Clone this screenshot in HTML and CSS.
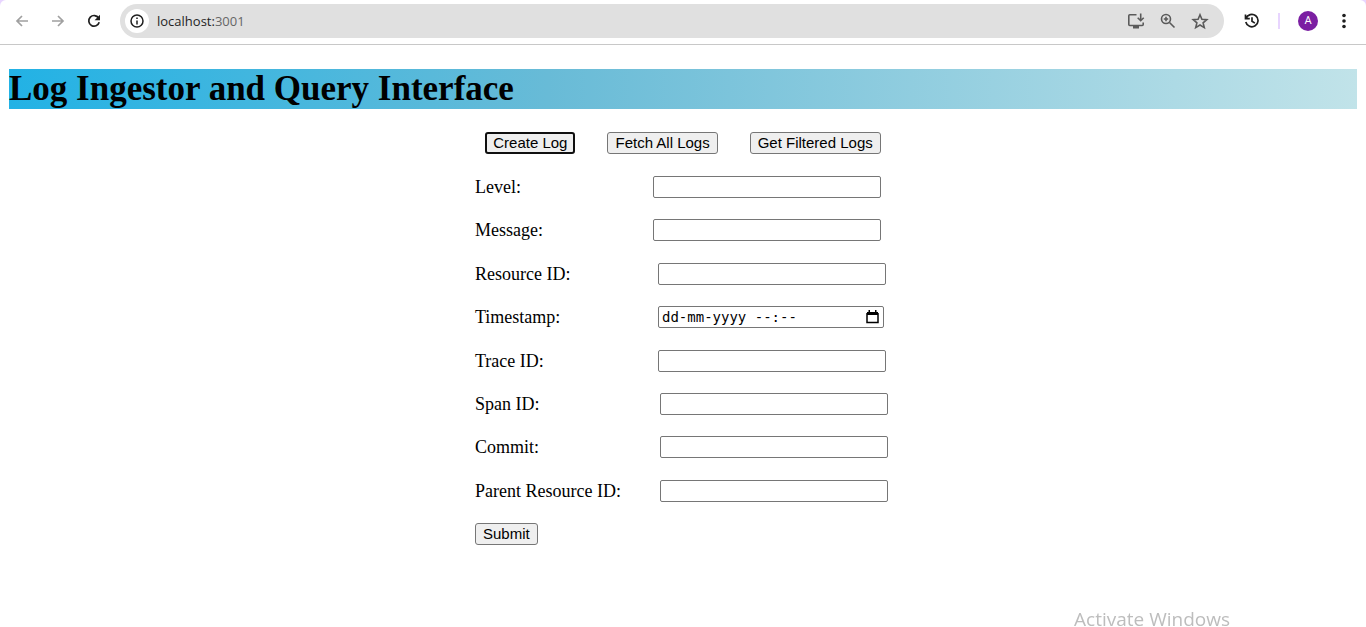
FILE: index.html
```html
<!DOCTYPE html>
<html lang="en">
<head>
<meta charset="utf-8">
<title>Log Ingestor and Query Interface</title>
<link rel="stylesheet" href="styles.css">
</head>
<body>
<div class="frame">
<header class="browser">
  <button class="nav nav-off" type="button" aria-label="Back"><svg viewBox="0 0 14 14"><path d="M13 7H2M7 2 2 7l5 5"/></svg></button>
  <button class="nav nav-off" type="button" aria-label="Forward"><svg viewBox="0 0 14 14"><path d="M1 7h11M7 2l5 5-5 5"/></svg></button>
  <button class="nav" type="button" aria-label="Reload"><svg viewBox="0 0 14 14"><path d="M11.600 4A5.300 5.300 0 1 0 12.200 8.300"/><path class="solid" d="M13 .8v5.400H7.600z"/></svg></button>
  <div class="omnibox">
    <button class="info" type="button" aria-label="Site information"><svg viewBox="0 0 14 14"><circle cx="7" cy="7" r="6"/><path d="M7 6.400v4M7 3.600v1.500"/></svg></button>
    <a class="url" href="#">localhost:<span class="port">3001</span></a>
    <button class="tool" type="button" aria-label="Install"><svg viewBox="0 0 18 18"><path d="M9.500 2.800H2.800Q1.800 2.800 1.800 3.800v8.700q0 1 1 1h12.400q1 0 1-1v-2M13.700 1.500V8.500M10.700 5.700l3 3 3-3"/><path class="solid" d="M6 13.500h6v3H6z"/></svg></button>
    <button class="tool" type="button" aria-label="Zoom"><svg viewBox="0 0 18 18"><circle cx="7" cy="7" r="4.500"/><path d="m10.500 10.500 5 5M7 4.800v4.400M4.800 7h4.400"/></svg></button>
    <button class="tool" type="button" aria-label="Bookmark"><svg viewBox="0 0 18 18"><path d="m9 2.800 1.900 4.500 4.900.4-3.700 3.200 1.200 4.700L9 13l-4.300 2.600 1.200-4.700-3.700-3.200 4.900-.4z"/></svg></button>
  </div>
  <button class="history" type="button" aria-label="History"><svg viewBox="0 0 16 16"><path d="M2 5.500A6.200 6.200 0 1 1 1.800 9M1.500 1.500V5.700h4.300M8 4.300V8.300l2.900 1.800"/></svg></button>
  <span class="divider"></span>
  <button class="avatar" type="button" aria-label="Profile">A</button>
  <button class="menu" type="button" aria-label="Menu"><svg viewBox="0 0 4 16"><circle cx="2" cy="2.500" r="1.800"/><circle cx="2" cy="8" r="1.800"/><circle cx="2" cy="13.500" r="1.800"/></svg></button>
</header>
</div>
<main class="page">
  <h1 class="title">Log Ingestor and Query Interface</h1>
  <nav class="actions">
    <button class="btn btn-focus" type="button">Create Log</button>
    <button class="btn" type="button">Fetch All Logs</button>
    <button class="btn" type="button">Get Filtered Logs</button>
  </nav>
  <form class="form">
    <div class="row row-narrow"><label for="level">Level:</label><input class="field" id="level" type="text"></div>
    <div class="row row-narrow"><label for="message">Message:</label><input class="field" id="message" type="text"></div>
    <div class="row"><label for="resource">Resource ID:</label><input class="field" id="resource" type="text"></div>
    <div class="row"><label for="time">Timestamp:</label><div class="field date"><input class="date-text" id="time" type="text" value="dd-mm-yyyy --:--"><button class="date-pick" type="button" aria-label="Pick a date"><svg viewBox="0 0 13 14"><path class="solid" d="M1 2h11v3H1zM2.500 0H4v2H2.500zM9 0h1.500v2H9z"/><path d="M1 3v9.500h11V3"/></svg></button></div></div>
    <div class="row"><label for="trace">Trace ID:</label><input class="field" id="trace" type="text"></div>
    <div class="row row-wide"><label for="span">Span ID:</label><input class="field" id="span" type="text"></div>
    <div class="row row-wide"><label for="commit">Commit:</label><input class="field" id="commit" type="text"></div>
    <div class="row row-wide"><label for="parent">Parent Resource ID:</label><input class="field" id="parent" type="text"></div>
    <button class="btn" type="submit">Submit</button>
  </form>
</main>
<div class="watermark">Activate Windows</div>
</body>
</html>
```
FILE: styles.css
```css
* { box-sizing: border-box; }
body { margin: 0; background: #fff; color: #000; font-family: "Liberation Serif", "Times New Roman", serif; overflow: hidden; }
button { margin: 0; padding: 0; border: 0; background: none; }
svg { display: block; fill: none; stroke: currentColor; stroke-width: 2; }
.solid { fill: currentColor; stroke: none; }

.frame { background: #e8d5ff; }
.browser { display: flex; align-items: center; height: 45px; padding: 0 20px 3px 15px; border-bottom: 1px solid #c8c8c8; border-radius: 6px 6px 0 0; background: #fff; font-family: "Open Sans", "Segoe UI", sans-serif; }
.nav { width: 14px; margin-right: 22px; color: #1f1f1f; }
.nav-off { color: #a0a0a0; }
.nav svg { width: 14px; height: 14px; stroke-width: 1.700; }
.omnibox { display: flex; align-items: center; flex: 1; height: 34px; margin-left: -3px; padding: 0 15px 0 5px; border-radius: 17px; background: #e0e0e0; }
.info { display: grid; place-items: center; width: 24px; height: 24px; border-radius: 50%; background: #fff; color: #1f1f1f; }
.info svg { width: 14px; height: 14px; stroke-width: 1.500; }
.url { flex: 1; margin-left: 8px; font-size: 13px; line-height: 20px; color: #1f1f1f; text-decoration: none; }
.port { color: #666; }
.tool { margin-left: 14px; color: #5a5a5a; }
.tool svg { width: 18px; height: 18px; stroke-width: 1.600; }
.history { margin-left: 20px; color: #1f1f1f; }
.history svg { width: 16px; height: 16px; stroke-width: 1.700; }
.divider { width: 2px; height: 16px; margin: 0 18px; background: #e8d5ff; }
.avatar { width: 20px; height: 20px; border-radius: 50%; background: #7b1fa2; color: #fff; font: 11px/20px Roboto, sans-serif; }
.menu { margin-left: 24px; color: #1f1f1f; }
.menu svg { width: 4px; height: 16px; fill: currentColor; stroke: none; }

.page { padding: 24px 9px 0; }
.title { margin: 0; font-size: 35px; line-height: 40px; background: linear-gradient(to right, #22b2e5, #68bbd7 40%, #c1e3e9); }
.actions { display: flex; justify-content: center; gap: 32px; margin: 23px 0 22px; }
.btn { height: 22px; padding: 0 7px; border: 1px solid #767676; border-radius: 3px; background: #efefef; color: #000; font: 15px/20px "Liberation Sans", Arial, sans-serif; }
.btn-focus { border: 2px solid #101010; padding: 0 6px; line-height: 18px; }
.form { display: flex; flex-direction: column; justify-content: space-between; align-items: flex-start; width: 416px; min-height: 369px; margin: 0 auto; }
.row { display: grid; grid-template-columns: 183px 228px; align-items: center; font-size: 18px; line-height: 22px; }
.row-narrow { grid-template-columns: 178px 228px; }
.row-wide { grid-template-columns: 185px 228px; }
.field { width: 100%; height: 22px; padding: 0 3px; border: 1px solid #767676; border-radius: 2px; background: #fff; font: 15px/20px "Liberation Sans", Arial, sans-serif; }
.date { display: flex; align-items: center; width: 226px; padding-right: 4px; }
.date-text { flex: 1; min-width: 0; padding: 0; border: 0; outline: 0; background: none; color: #000; font: 14px/20px "DejaVu Sans Mono", monospace; }
.date-pick svg { width: 13px; height: 14px; stroke-width: 1.500; }
.watermark { position: fixed; right: 136px; bottom: 0; color: #bdbdbd; font: 19px/16px "Open Sans", "Segoe UI", sans-serif; }
```
